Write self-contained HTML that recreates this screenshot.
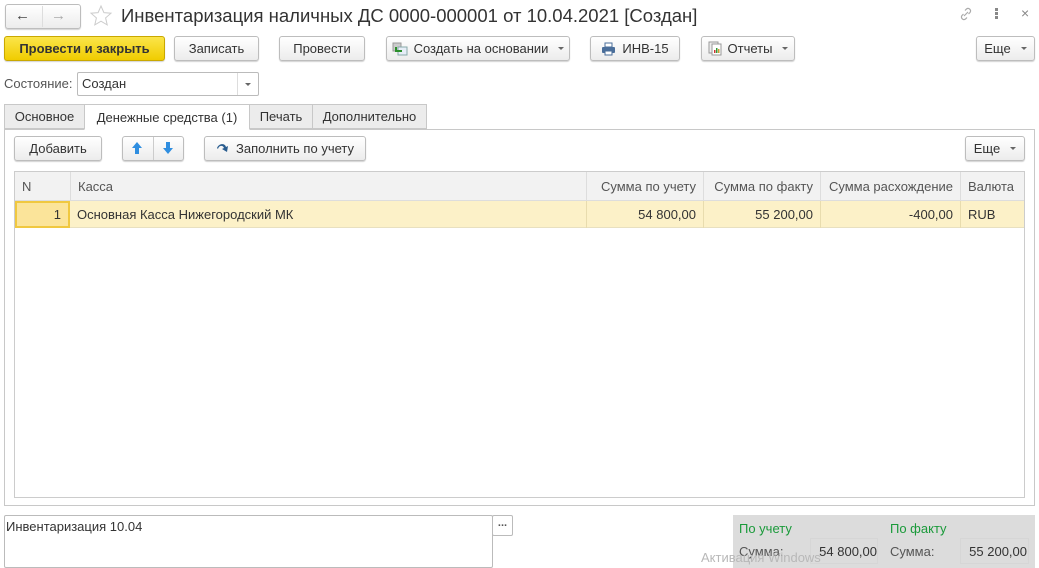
<!DOCTYPE html>
<html><head><meta charset="utf-8"><style>
*{box-sizing:border-box;margin:0;padding:0}
body{width:1039px;height:568px;background:#fff;font-family:"Liberation Sans",Arial,sans-serif;font-size:13px;color:#333;position:relative;overflow:hidden}
.a{position:absolute}
.btn{position:absolute;height:25px;border:1px solid #bdbdbd;border-radius:3px;background:linear-gradient(#fff,#ececec);box-shadow:0 1px 1px rgba(0,0,0,.18);display:flex;align-items:center;justify-content:center;color:#333;font-size:13px;white-space:nowrap;gap:6px}
.dd:after{content:"";border-left:3px solid transparent;border-right:3px solid transparent;border-top:3px solid #666;margin-left:4px}
.tab{position:absolute;top:104px;height:25px;border:1px solid #c8c8c8;background:#ececec;display:flex;align-items:center;justify-content:center;color:#333}
.th{position:absolute;top:172px;height:29px;display:flex;align-items:center;color:#555;border-left:1px solid #ddd;padding:0 7px}
.td{position:absolute;top:201px;height:27px;display:flex;align-items:center;color:#333;padding:0 7px;border-left:1px solid #e8dcae}
</style></head><body>
<div class="btn" style="left:5px;top:4px;width:76px;height:25px"></div>
<div class="a" style="left:42px;top:6px;width:1px;height:21px;background:#ddd"></div>
<div class="a" style="left:15px;top:7px;font-size:15px;color:#444;font-weight:bold">&#8592;</div>
<div class="a" style="left:51px;top:7px;font-size:15px;color:#aaa;font-weight:bold">&#8594;</div>
<svg class="a" style="left:89px;top:4px" width="24" height="24" viewBox="0 0 24 24"><path d="M12 2l2.9 6.6 7.1.6-5.4 4.7 1.6 7-6.2-3.7-6.2 3.7 1.6-7L2 9.2l7.1-.6z" fill="none" stroke="#ccc" stroke-width="1"/></svg>
<div class="a" style="left:121px;top:5px;font-size:18.5px;color:#333">Инвентаризация наличных ДС 0000-000001 от 10.04.2021 [Создан]</div>
<svg class="a" style="left:958px;top:6px" width="16" height="16" viewBox="0 0 16 16"><path d="M6 10l4-4M7 4.5l1.5-1.5a2.5 2.5 0 013.5 3.5L10.5 8M9 11.5L7.5 13A2.5 2.5 0 014 9.5L5.5 8" fill="none" stroke="#aaa" stroke-width="1.2"/></svg>
<div class="a" style="left:995px;top:8px;width:3px;height:3px;background:#888;box-shadow:0 4px 0 #888,0 8px 0 #888"></div>
<div class="a" style="left:1021px;top:5px;font-size:14px;color:#888">×</div>
<div class="btn" style="left:4px;top:36px;width:161px;background:linear-gradient(#fbe54a,#f0cc00);border-color:#c9a800;font-weight:bold;color:#333">Провести и закрыть</div>
<div class="btn" style="left:174px;top:36px;width:85px">Записать</div>
<div class="btn" style="left:279px;top:36px;width:86px">Провести</div>
<div class="btn dd" style="left:386px;top:36px;width:184px"><svg width="16" height="14"><rect x="1" y="1" width="8" height="8" fill="#ccc" stroke="#999"/><rect x="6" y="5" width="9" height="8" fill="#e6eef7" stroke="#8aa"/><path d="M4 5v4h6" stroke="#2a8f2a" stroke-width="2" fill="none"/></svg>Создать на основании</div>
<div class="btn" style="left:590px;top:36px;width:90px"><svg width="15" height="14"><rect x="4" y="1" width="7" height="4" fill="#fff" stroke="#4a6e9a"/><rect x="1" y="5" width="13" height="6" rx="1" fill="#4a6e9a"/><rect x="4" y="9" width="7" height="4" fill="#fff" stroke="#4a6e9a"/></svg>ИНВ-15</div>
<div class="btn dd" style="left:701px;top:36px;width:94px"><svg width="14" height="15"><rect x="1" y="1" width="9" height="11" fill="#eee" stroke="#999"/><rect x="4" y="3" width="9" height="11" fill="#fff" stroke="#999"/><rect x="6" y="9" width="1.5" height="3" fill="#c33"/><rect x="8" y="7" width="1.5" height="5" fill="#393"/><rect x="10" y="8" width="1.5" height="4" fill="#c93"/></svg>Отчеты</div>
<div class="btn dd" style="left:976px;top:36px;width:59px">Еще</div>
<div class="a" style="left:4px;top:76px;color:#555">Состояние:</div>
<div class="a" style="left:77px;top:72px;width:182px;height:24px;border:1px solid #bbb;border-radius:2px"></div>
<div class="a" style="left:82px;top:76px;color:#333">Создан</div>
<div class="a" style="left:237px;top:73px;width:1px;height:22px;background:#ddd"></div>
<div class="a" style="left:245px;top:83px;border-left:3px solid transparent;border-right:3px solid transparent;border-top:3px solid #666"></div>
<div class="a" style="left:4px;top:129px;width:1031px;height:377px;border:1px solid #c8c8c8"></div>
<div class="tab" style="left:4px;width:81px">Основное</div>
<div class="tab" style="left:84px;width:166px;background:#fff;border-bottom-color:#fff;height:26px">Денежные средства (1)</div>
<div class="tab" style="left:249px;width:64px">Печать</div>
<div class="tab" style="left:312px;width:115px">Дополнительно</div>
<div class="btn" style="left:14px;top:136px;width:88px">Добавить</div>
<div class="btn" style="left:122px;top:136px;width:62px"></div>
<div class="a" style="left:153px;top:137px;width:1px;height:23px;background:#ccc"></div>
<svg class="a" style="left:131px;top:141px" width="12" height="14"><path d="M6 1L1 7h3v6h4V7h3z" fill="#2f8ee0"/></svg>
<svg class="a" style="left:162px;top:141px" width="12" height="14"><path d="M6 13L1 7h3V1h4v6h3z" fill="#2f8ee0"/></svg>
<div class="btn" style="left:204px;top:136px;width:162px"><svg width="14" height="13"><path d="M1 6C3 1 9 1 10 5l2-1-1 6-5-3 2-1C7 3 3 3 2 7z" fill="#2a5d8f"/></svg>Заполнить по учету</div>
<div class="btn dd" style="left:965px;top:136px;width:60px">Еще</div>
<div class="a" style="left:14px;top:171px;width:1011px;height:327px;border:1px solid #ccc"></div>
<div class="a" style="left:15px;top:172px;width:1009px;height:29px;background:#f2f2f2;border-bottom:1px solid #ddd"></div>
<div class="th" style="left:15px;width:55px;border-left:none">N</div>
<div class="th" style="left:70px;width:516px">Касса</div>
<div class="th" style="left:586px;width:117px;justify-content:flex-end">Сумма по учету</div>
<div class="th" style="left:703px;width:117px;justify-content:flex-end">Сумма по факту</div>
<div class="th" style="left:820px;width:140px;justify-content:flex-end">Сумма расхождение</div>
<div class="th" style="left:960px;width:64px">Валюта</div>
<div class="a" style="left:15px;top:201px;width:1009px;height:27px;background:#fcf1c8;border-bottom:1px solid #e8e0c0"></div>
<div class="td" style="left:15px;width:55px;justify-content:flex-end;background:#fbe49a;border:2px solid #f0c840">1</div>
<div class="td" style="left:70px;width:516px;border-left:none">Основная Касса Нижегородский МК</div>
<div class="td" style="left:586px;width:117px;justify-content:flex-end">54 800,00</div>
<div class="td" style="left:703px;width:117px;justify-content:flex-end">55 200,00</div>
<div class="td" style="left:820px;width:140px;justify-content:flex-end">-400,00</div>
<div class="td" style="left:960px;width:64px">RUB</div>
<div class="a" style="left:4px;top:515px;width:489px;height:53px;border:1px solid #bbb;border-radius:2px"></div>
<div class="a" style="left:6px;top:519px;color:#333">Инвентаризация 10.04</div>
<div class="a" style="left:492px;top:515px;width:21px;height:21px;border:1px solid #bbb;border-radius:2px;text-align:center;font-size:11px;line-height:14px;color:#555;font-weight:bold">...</div>
<div class="a" style="left:733px;top:515px;width:302px;height:53px;background:#dcdcdc"></div>
<div class="a" style="left:739px;top:521px;color:#1a9a3a">По учету</div>
<div class="a" style="left:890px;top:521px;color:#1a9a3a">По факту</div>
<div class="a" style="left:739px;top:544px;color:#555">Сумма:</div>
<div class="a" style="left:810px;top:538px;width:68px;height:26px;border:1px solid #d6d6d6"></div>
<div class="a" style="left:800px;top:544px;width:77px;text-align:right;color:#333">54 800,00</div>
<div class="a" style="left:890px;top:544px;color:#555">Сумма:</div>
<div class="a" style="left:960px;top:538px;width:69px;height:26px;border:1px solid #d6d6d6"></div>
<div class="a" style="left:950px;top:544px;width:77px;text-align:right;color:#333">55 200,00</div>
<div class="a" style="left:701px;top:550px;color:#b8b8b8;font-size:13px">Активация Windows</div>
</body></html>
